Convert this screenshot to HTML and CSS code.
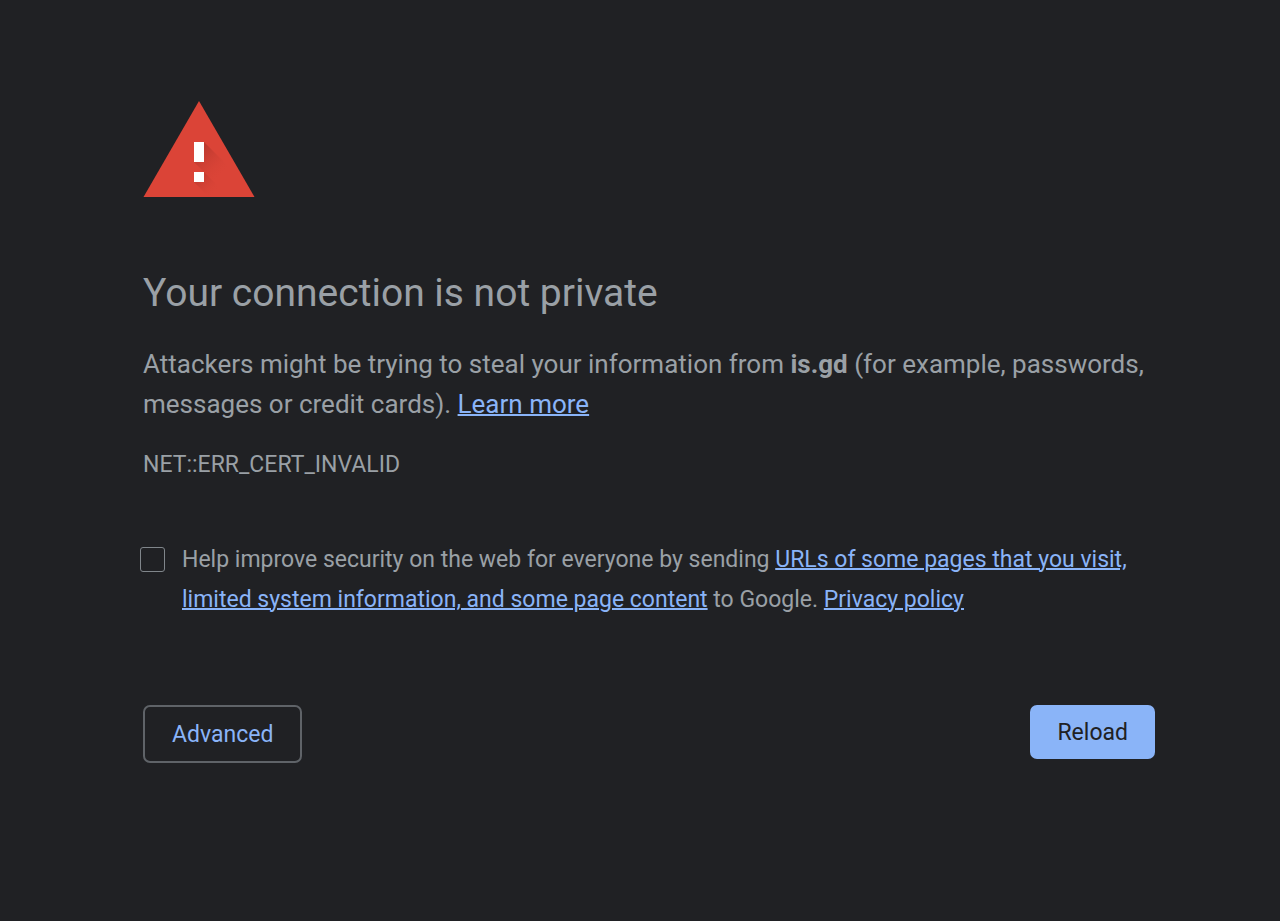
FILE: index.html
```html
<!DOCTYPE html>
<html lang="en">
<head>
<meta charset="utf-8">
<meta name="viewport" content="width=device-width, initial-scale=1">
<title>Privacy error</title>
<link rel="stylesheet" href="styles.css">
</head>
<body>
<main class="interstitial">
  <svg class="warning-icon" viewBox="0 0 112 96" aria-hidden="true">
    <defs>
      <linearGradient id="shade" gradientUnits="userSpaceOnUse" x1="54" y1="48" x2="80" y2="74">
        <stop offset="0" stop-color="#b5372d"/>
        <stop offset="1" stop-color="#db4437" stop-opacity="0"/>
      </linearGradient>
      <linearGradient id="shade-dot" gradientUnits="userSpaceOnUse" x1="52" y1="72" x2="72" y2="92">
        <stop offset="0" stop-color="#b5372d"/>
        <stop offset="1" stop-color="#db4437" stop-opacity="0"/>
      </linearGradient>
    </defs>
    <path fill="#db4437" d="M56 0 111.500 96H.5z"/>
    <path fill="url(#shade)" d="M61 41 95 75V96H86L51 61z"/>
    <path fill="url(#shade-dot)" d="M61 71 86 96H66L51 81z"/>
    <path fill="#fff" d="M51 41h10v20H51zM51 71h10v10H51z"/>
  </svg>
  <h1 class="title">Your connection is not private</h1>
  <p class="message">Attackers might be trying to steal your information from <strong>is.gd</strong> (for example, passwords, messages or credit cards). <a class="link" href="#learn-more">Learn more</a></p>
  <p class="error-code">NET::ERR_CERT_INVALID</p>
  <div class="opt-in">
    <input class="checkbox" type="checkbox" id="reporting">
    <label class="opt-in-text" for="reporting">Help improve security on the web for everyone by sending <a class="link" href="#whitepaper">URLs of some pages that you visit, limited system information, and some page content</a> to Google. <a class="link" href="#privacy">Privacy policy</a></label>
  </div>
  <div class="actions">
    <button class="button button-secondary" type="button">Advanced</button>
    <button class="button button-primary" type="button">Reload</button>
  </div>
</main>
</body>
</html>
```
FILE: styles.css
```css
* {
  box-sizing: border-box;
}

body {
  margin: 0;
  background: #202124;
  color: #9aa0a6;
  font-family: Roboto, "Liberation Sans", sans-serif;
}

.interstitial {
  padding: 101px 125px 60px 143px;
}

.warning-icon {
  display: block;
  width: 112px;
  height: 96px;
}

.title {
  margin: 71px 0 0;
  font-size: 39px;
  font-weight: 400;
  line-height: 50px;
}

.message {
  margin: 26px 0 0;
  font-size: 26px;
  line-height: 40px;
}

.error-code {
  margin: 25px 0 0;
  font-size: 23px;
  line-height: 32px;
}

.link {
  color: #8ab4f8;
  text-decoration-thickness: 2px;
}

.opt-in {
  display: flex;
  align-items: flex-start;
  gap: 17px;
  margin: 59px 0 0 -3px;
}

.checkbox {
  flex: none;
  appearance: none;
  width: 25px;
  height: 25px;
  margin: 7px 0 0;
  border: 1px solid #80868b;
  border-radius: 3px;
  background: transparent;
}

.checkbox:checked {
  background: #8ab4f8;
}

.opt-in-text {
  font-size: 23px;
  line-height: 40px;
}

.actions {
  display: flex;
  align-items: flex-start;
  justify-content: space-between;
  margin-top: 85px;
}

.button {
  padding: 13px 27px 11px;
  border: 0;
  border-radius: 7px;
  font-family: inherit;
  font-size: 23px;
  line-height: 30px;
  cursor: pointer;
}

.button-secondary {
  border: 2px solid #5f6368;
  background: transparent;
  color: #8ab4f8;
}

.button-primary {
  background: #8ab4f8;
  color: #202124;
}
```
